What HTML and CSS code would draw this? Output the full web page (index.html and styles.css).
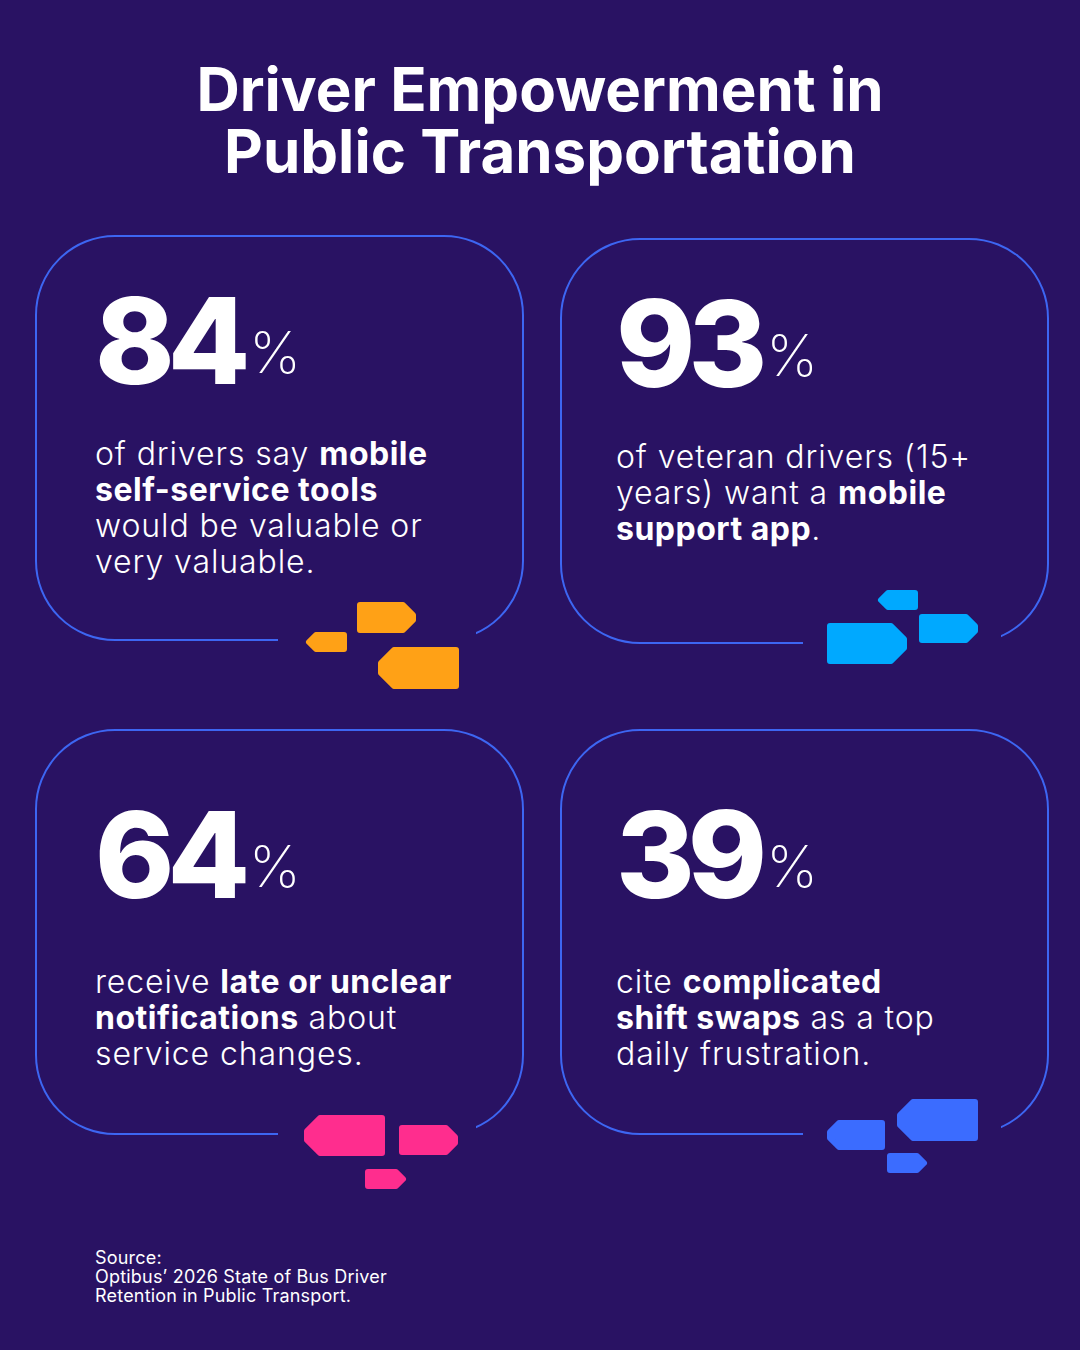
FILE: index.html
```html
<!DOCTYPE html>
<html lang="en">
<head>
<meta charset="utf-8">
<title>Driver Empowerment in Public Transportation</title>
<link rel="stylesheet" href="styles.css">
</head>
<body>
<main class="page">
  <h1 class="title">Driver Empowerment in<br>Public Transportation</h1>

  <section class="grid">
    <article class="card">
      <div class="stat"><span class="num">84</span><span class="pct">%</span></div>
      <p class="desc">of drivers say <b>mobile</b><br><b>self-service tools</b><br>would be valuable or<br>very valuable.</p>
      <span class="gap"></span>
      <svg class="deco" viewBox="0 0 240 130" aria-hidden="true">
        <g class="orange">
          <polygon points="95,30 138,30 148,40 148,45 138,55 95,55"/>
          <polygon points="51,60 79,60 79,74 51,74 44,67"/>
          <polygon points="129,75 191,75 191,111 129,111 116,98 116,88"/>
        </g>
      </svg>
    </article>

    <article class="card">
      <div class="stat"><span class="num">93</span><span class="pct">%</span></div>
      <p class="desc">of veteran drivers (15+<br>years) want a <b>mobile</b><br><b>support app</b>.</p>
      <span class="gap"></span>
      <svg class="deco" viewBox="0 0 240 130" aria-hidden="true">
        <g class="cyan">
          <polygon points="98,15 125,15 125,29 98,29 91,22"/>
          <polygon points="132,39 176,39 185,48 185,53 176,62 132,62"/>
          <polygon points="40,48 101,48 114,61 114,70 101,83 40,83"/>
        </g>
      </svg>
    </article>

    <article class="card card-low">
      <div class="stat"><span class="num">64</span><span class="pct">%</span></div>
      <p class="desc">receive <b>late or unclear</b><br><b>notifications</b> about<br>service changes.</p>
      <span class="gap"></span>
      <svg class="deco" viewBox="0 0 240 130" aria-hidden="true">
        <g class="pink">
          <polygon points="55,49 117,49 117,84 55,84 42,71 42,62"/>
          <polygon points="137,59 181,59 190,68 190,74 181,83 137,83"/>
          <polygon points="103,103 131,103 138,110 131,117 103,117"/>
        </g>
      </svg>
    </article>

    <article class="card card-low">
      <div class="stat"><span class="num">39</span><span class="pct">%</span></div>
      <p class="desc">cite <b>complicated</b><br><b>shift swaps</b> as a top<br>daily frustration.</p>
      <span class="gap"></span>
      <svg class="deco" viewBox="0 0 240 130" aria-hidden="true">
        <g class="blue">
          <polygon points="49,54 92,54 92,78 49,78 40,69 40,63"/>
          <polygon points="123,33 185,33 185,69 123,69 110,56 110,46"/>
          <polygon points="100,87 127,87 134,94 127,101 100,101"/>
        </g>
      </svg>
    </article>
  </section>

  <p class="source">Source:<br>Optibus’ 2026 State of Bus Driver<br>Retention in Public Transport.</p>
</main>
</body>
</html>
```

FILE: styles.css
```css
* { box-sizing: border-box; }

html, body {
  margin: 0;
  padding: 0;
  background: #291263;
}

body {
  font-family: "Inter", "Open Sans", "Liberation Sans", sans-serif;
  color: #ffffff;
}

.page {
  width: 1080px;
  height: 1350px;
  padding-top: 58px;
  overflow: hidden;
}

.title {
  margin: 0;
  text-align: center;
  font-size: 60px;
  line-height: 62px;
  font-weight: 700;
  letter-spacing: 0;
}

.grid {
  margin-top: 53px;
  padding-left: 35px;
  display: grid;
  grid-template-columns: 489px 489px;
  column-gap: 36px;
  row-gap: 85px;
  align-items: start;
}

.card {
  position: relative;
  height: 406px;
  border: 2px solid #3d66f2;
  border-radius: 80px;
  padding: 44px 0 0 58px;
}

.card:nth-child(2) {
  margin-top: 3px;
  padding-left: 54px;
}

.card:nth-child(4) {
  padding-left: 54px;
}

.card-low {
  padding-top: 64px;
}

.stat {
  height: 120px;
  line-height: 120px;
  white-space: nowrap;
}

.num {
  font-size: 120px;
  font-weight: 800;
  letter-spacing: -7px;
  line-height: 1;
}

.pct {
  font-size: 58px;
  font-weight: 200;
  line-height: 1;
  margin-left: 6px;
  vertical-align: 11px;
}

.desc {
  margin: 35px 0 0;
  font-size: 32px;
  line-height: 36px;
  font-weight: 300;
  letter-spacing: 0.9px;
  white-space: nowrap;
}

.card-low .desc {
  margin-top: 49px;
}

.desc b {
  font-weight: 700;
  letter-spacing: 0.5px;
}

.gap {
  position: absolute;
  left: 241px;
  width: 198px;
  bottom: -6px;
  height: 24px;
  background: #291263;
}

.deco {
  position: absolute;
  left: 228px;
  top: 338px;
  width: 240px;
  height: 130px;
  overflow: visible;
}

.deco polygon {
  stroke-width: 6;
  stroke-linejoin: round;
}

.orange { fill: #ffa116; stroke: #ffa116; }
.cyan { fill: #00a9ff; stroke: #00a9ff; }
.pink { fill: #ff2d8e; stroke: #ff2d8e; }
.blue { fill: #3b6cff; stroke: #3b6cff; }

.source {
  margin: 113px 0 0 95px;
  font-size: 18px;
  line-height: 19px;
  font-weight: 400;
  letter-spacing: 0.2px;
}
```
